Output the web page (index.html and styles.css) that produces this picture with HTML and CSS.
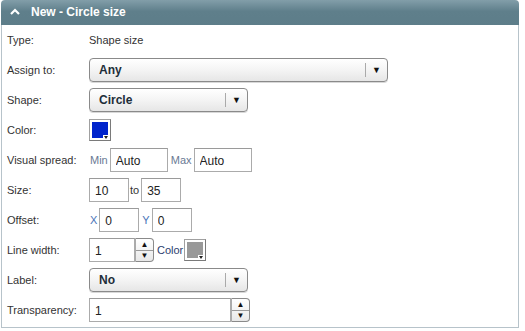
FILE: index.html
```html
<!DOCTYPE html>
<html lang="en">
<head>
    <meta charset="UTF-8" />
    <title>New - Circle size</title>
    <link rel="stylesheet" href="styles.css">
</head>
<body>
    <div class="panel">
        <div class="panel-header">
            <svg class="caret" width="10" height="7" viewBox="0 0 10 7"><path d="M1 6 L5 2 L9 6" fill="none" stroke="#fff" stroke-width="2.2"/></svg>
            <span>New - Circle size</span>
        </div>
        <div class="panel-body">
            <div class="row">
                <div class="label">Type:</div>
                <div class="value">Shape size</div>
            </div>
            <div class="row">
                <div class="label">Assign to:</div>
                <div class="select wide"><span class="sel-text">Any</span><span class="sel-btn">&#9660;</span></div>
            </div>
            <div class="row">
                <div class="label">Shape:</div>
                <div class="select"><span class="sel-text">Circle</span><span class="sel-btn">&#9660;</span></div>
            </div>
            <div class="row">
                <div class="label">Color:</div>
                <div class="swatch"><span class="sw-fill blue"></span><span class="sw-arrow"></span></div>
            </div>
            <div class="row">
                <div class="label">Visual spread:</div>
                <span class="pre pre-grey">Min</span>
                <input class="field w57" value="Auto">
                <span class="pre pre-grey">Max</span>
                <input class="field w57" value="Auto">
            </div>
            <div class="row">
                <div class="label">Size:</div>
                <input class="field w39" value="10">
                <span class="pre">to</span>
                <input class="field w39" value="35">
            </div>
            <div class="row">
                <div class="label">Offset:</div>
                <span class="pre pre-blue">X</span>
                <input class="field w39" value="0">
                <span class="pre pre-blue">Y</span>
                <input class="field w39" value="0">
            </div>
            <div class="row">
                <div class="label">Line width:</div>
                <div class="spin">
                    <input class="field w45" value="1">
                    <div class="spin-btns"><span class="up">&#9650;</span><span class="down">&#9660;</span></div>
                </div>
                <span class="pre pre-dark">Color</span>
                <div class="swatch"><span class="sw-fill grey"></span><span class="sw-arrow"></span></div>
            </div>
            <div class="row">
                <div class="label">Label:</div>
                <div class="select"><span class="sel-text">No</span><span class="sel-btn">&#9660;</span></div>
            </div>
            <div class="row">
                <div class="label">Transparency:</div>
                <div class="spin">
                    <input class="field w141" value="1">
                    <div class="spin-btns"><span class="up">&#9650;</span><span class="down">&#9660;</span></div>
                </div>
            </div>
        </div>
    </div>
</body>
</html>
```

FILE: styles.css
```css
body {
    margin: 0;
    padding: 0 0 0 1px;
    background: #fff;
    font-family: "Liberation Sans", Arial, sans-serif;
    font-size: 11px;
    color: #333;
}
.panel {
    width: 518px;
}
.panel-header {
    height: 25px;
    background: linear-gradient(#829ea9, #5f7f8b 45%, #5d7d89);
    border-radius: 4px 4px 0 0;
    color: #fff;
    font-weight: bold;
    font-size: 12px;
    display: flex;
    align-items: center;
    padding-left: 9px;
}
.caret {
    margin-right: 11px;
    margin-top: -2px;
}
.panel-header span {
    margin-top: -1px;
}
.panel-body {
    border: 1px solid #b7c3ca;
    border-top: none;
    padding: 3px 5px 5px 5px;
    display: flex;
    flex-direction: column;
    gap: 6px;
}
.row {
    height: 24px;
    display: flex;
    align-items: center;
}
.label {
    width: 82px;
    flex: none;
    color: #333;
}
.value {
    color: #333;
}
.select {
    width: 157px;
    height: 22px;
    border: 1px solid #8a8a8a;
    border-radius: 4px;
    background: linear-gradient(#ffffff, #f4f4f4 50%, #e6e6e6);
    display: flex;
    align-items: center;
    box-shadow: 0 1px 0 #d8d8d8;
}
.select.wide {
    width: 297px;
}
.sel-text {
    flex: 1;
    padding-left: 9px;
    font-weight: bold;
    color: #1e2e3a;
    font-size: 12px;
}
.sel-btn {
    width: 21px;
    height: 14px;
    border-left: 1px solid #aaa;
    font-size: 9px;
    color: #111;
    display: flex;
    align-items: center;
    justify-content: center;
}
.swatch {
    width: 16px;
    height: 16px;
    padding: 2px;
    background: #fff;
    border: 1px solid #a0a0a0;
    border-right-color: #7a7a7a;
    border-bottom-color: #7a7a7a;
    position: relative;
}
.sw-fill {
    display: block;
    width: 16px;
    height: 16px;
}
.sw-fill.blue {
    background: #0024cc;
}
.sw-fill.grey {
    background: #999;
}
.sw-arrow {
    position: absolute;
    right: 0;
    bottom: 0;
    width: 7px;
    height: 5px;
    background: #fff;
}
.sw-arrow::after {
    content: "";
    position: absolute;
    left: 1px;
    top: 1px;
    border-left: 2.5px solid transparent;
    border-right: 2.5px solid transparent;
    border-top: 3px solid #222;
}
.field {
    box-sizing: border-box;
    height: 24px;
    border: 1px solid #ababab;
    border-top-color: #9a9a9a;
    padding: 1px 0 0 5px;
    font-family: "Liberation Sans", Arial, sans-serif;
    font-size: 12px;
    color: #222;
    background: #fff;
    outline: none;
    margin: 0;
}
.w39 { width: 40px; }
.w45 { width: 46px; }
.w57 { width: 58px; }
.w141 { width: 142px; }
.pre {
    padding: 0 2px 0 3px;
    color: #333;
}
.pre:first-of-type {
    padding-left: 1px;
}
.pre-grey { color: #6a7a94; }
.pre-blue { color: #4a74b8; }
.row .pre-dark { color: #2c3d6e; padding: 0 1px 0 3px; }
.spin {
    display: flex;
}
.spin-btns {
    width: 17px;
    height: 22px;
    border: 1px solid #8a8a8a;
    border-left: 1px solid #aaa;
    border-radius: 0 4px 4px 0;
    display: flex;
    flex-direction: column;
    background: linear-gradient(#fff, #e8e8e8);
}
.spin-btns span {
    flex: 1;
    font-size: 8px;
    color: #111;
    display: flex;
    align-items: center;
    justify-content: center;
}
.spin-btns .up {
    border-bottom: 1px solid #9a9a9a;
}
```
